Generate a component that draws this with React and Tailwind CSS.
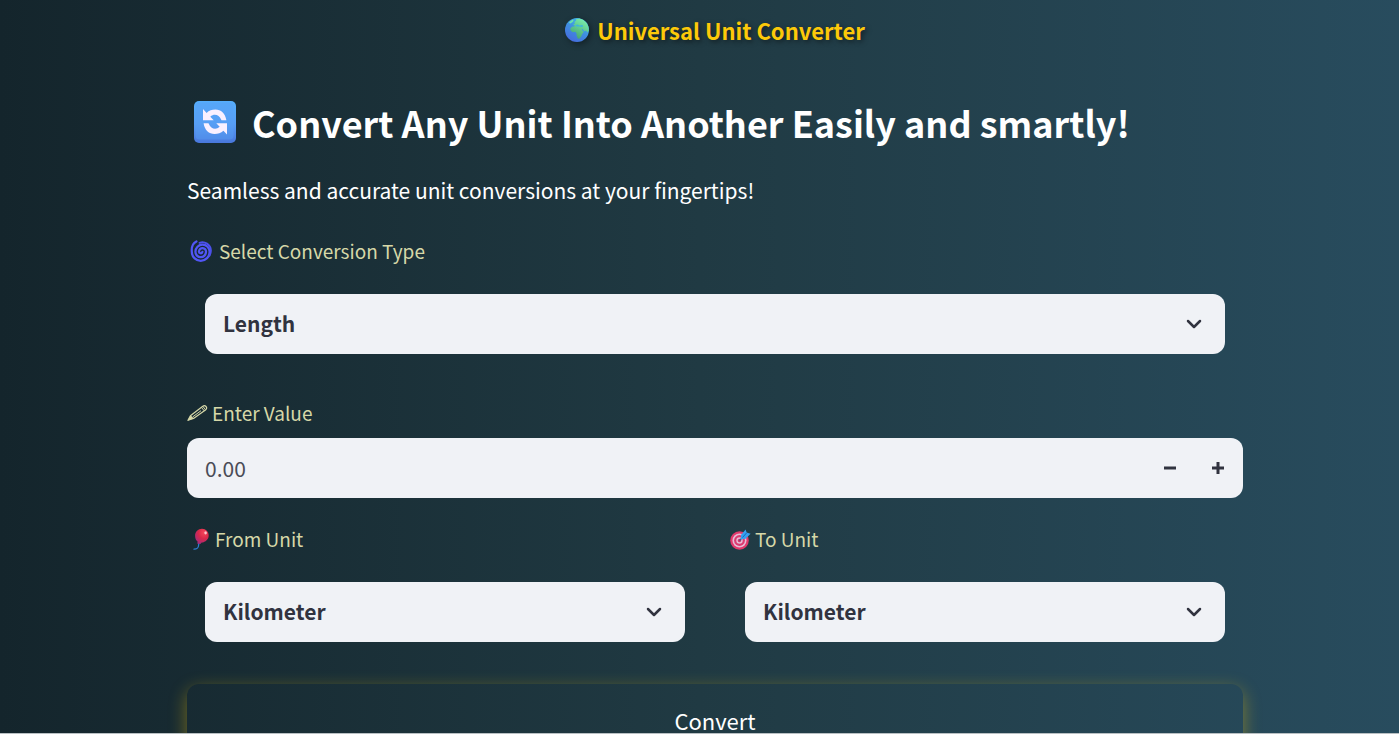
import { useState } from "react";

const units = ["Kilometer", "Meter", "Centimeter", "Mile", "Foot", "Inch"];
const types = ["Length", "Weight", "Temperature", "Time"];

function Globe() {
  return (
    <svg viewBox="0 0 24 24" className="size-6 shrink-0 drop-shadow-[2px_2px_3px_rgba(0,0,0,0.4)]" aria-hidden="true">
      <defs>
        <linearGradient id="sea" x1="0.8" y1="0" x2="0.2" y2="1">
          <stop offset="0" stopColor="#42c3e8" />
          <stop offset="0.5" stopColor="#3f8ee0" />
          <stop offset="1" stopColor="#4668de" />
        </linearGradient>
        <linearGradient id="land" x1="0.8" y1="0" x2="0.3" y2="1">
          <stop offset="0" stopColor="#7cf2b0" />
          <stop offset="1" stopColor="#45a36f" />
        </linearGradient>
      </defs>
      <circle cx="12" cy="12" r="12" fill="url(#sea)" />
      <path
        fill="url(#land)"
        d="M8.200 6.600 10 5.400 9.400 4 11.200 2.600 11 1.200 14.200.6 18 1.800 21.400 4.700 23.400 8.600 23.800 12.800 22.300 14.400 21.200 12.600 19.300 13.200 17.900 11.300 16.600 10.600 17.600 12.900 18.900 13.800 17.200 16 16.300 18.300 14.600 20.600 12.900 20.800 11.700 17.900 11.500 15.200 10.200 13.800 7.600 14.200 5.600 12.600 5.300 10.600 7 8.700 10.200 8.200z"
      />
      <path d="M10 7.600 12.400 6.600 14.500 7.400 17.400 6.900 18.200 8.200 17 9 13.900 8.600 11.500 8.400z" fill="#3fb4dd" />
      <path d="M3.900 4.500 7.400 1.800 8.600 2.200 7.600 4 5.300 5.500z" fill="#6de5a8" />
    </svg>
  );
}

function Cycle() {
  return (
    <svg viewBox="0 0 42 42" className="size-[42px] shrink-0" aria-hidden="true">
      <defs>
        <linearGradient id="tile" x1="0" y1="0" x2="0" y2="1">
          <stop offset="0" stopColor="#55aefc" />
          <stop offset="0.55" stopColor="#579df5" />
          <stop offset="1" stopColor="#4977dc" />
        </linearGradient>
      </defs>
      <rect width="42" height="42" rx="5" fill="url(#tile)" />
      <rect x="1.5" y="1.5" width="38" height="37" rx="4" fill="#599ff4" opacity="0.45" />
      <g fill="#faf0ff">
        <path d="M9 8v11.300h10.700l-3.400-3.500c3.800-3.600 9-2 10.800 2.800l.4.700h4.900C31.200 12.400 27 8.600 21.500 8.600c-3.500 0-6.500 1.100-8.900 3.300z" />
        <path d="M33 33.600V22.300H22.300l3.400 3.500c-3.800 3.600-9 2-10.800-2.800l-.4-.7H9.600C10.600 29.200 15 33 20.500 33c3.500 0 6.500-1.100 8.900-3.200z" />
      </g>
    </svg>
  );
}

function Cyclone() {
  return (
    <svg viewBox="0.5 0.5 19.500 19.500" className="size-[22px] shrink-0" aria-hidden="true">
      <path
        fill="none"
        stroke="#5156f6"
        strokeWidth="2"
        strokeLinecap="round"
        d="M11.500 11A1.500 1.500 0 0 1 8.500 10.500 3.100 3.100 0 0 1 14.700 11 4.700 4.700 0 0 1 5.300 11 6.300 6.300 0 0 1 17.900 11 7.900 7.900 0 0 1 2.100 11C1.800 7.500 3 3.300 6.200 1.800"
      />
      <path
        fill="none"
        stroke="#4b50ea"
        strokeWidth="1.700"
        strokeLinecap="round"
        d="M9 3C13.500 1.300 18.700 4.500 19 9.600c.1 2-.4 3.400-1.300 4.900"
      />
    </svg>
  );
}

function Pencil() {
  return (
    <svg viewBox="0 0 21 18" className="h-[18px] w-[21px] shrink-0" aria-hidden="true">
      <path
        d="M1 16.300 3.400 11.800 15.800 2.200Q17.600.9 19 2.500T18.800 5.700L6.500 14.400z"
        fill="none"
        stroke="#d6d8a8"
        strokeWidth="1.200"
        strokeLinejoin="round"
      />
      <path d="M.6 16.700 3.400 11.800 5.200 12.400 6.500 14.400z" fill="#d6d8a8" />
      <path d="M14.400 3.300 17.300 6.900M15.800 2.300l2.800 3.500M6 12.700l8-6" stroke="#d6d8a8" strokeWidth="1" />
    </svg>
  );
}

function Balloon() {
  return (
    <svg viewBox="0 0 16 22" className="h-[22px] w-4 shrink-0" aria-hidden="true">
      <defs>
        <radialGradient id="balloon" cx="0.65" cy="0.25" r="0.8">
          <stop offset="0" stopColor="#f5475a" />
          <stop offset="0.5" stopColor="#d9284a" />
          <stop offset="1" stopColor="#a32a7c" />
        </radialGradient>
      </defs>
      <path d="M5.800 15.500C5.400 18 6.200 21.200 1 21.200" fill="none" stroke="#2d7fd3" strokeWidth="1.300" strokeLinecap="round" />
      <path d="M9 .8c3.900 0 6.700 3 6.700 6.600 0 3.900-3.200 6.600-7 7.200l-1.400 1.500-3.200-.7.600-1.600C2.900 12.400 2.100 10.300 2.100 7.800 2.100 3.800 5.100.8 9 .8z" fill="url(#balloon)" />
      <ellipse cx="12.600" cy="4.800" rx="1.300" ry="1.600" fill="#ffc4cc" />
    </svg>
  );
}

function Target() {
  return (
    <svg viewBox="0 0 21 21" className="size-[21px] shrink-0" aria-hidden="true">
      <circle cx="9.500" cy="11.500" r="9.300" fill="#e2396c" />
      <circle cx="9.500" cy="11.500" r="7" fill="#e6bcd6" />
      <circle cx="9.500" cy="11.500" r="5.400" fill="#dc3a70" />
      <circle cx="9.500" cy="11.500" r="3.200" fill="#e6bcd6" />
      <circle cx="9.500" cy="11.500" r="1.700" fill="#d83268" />
      <path d="M9.500 11.500l5-5" stroke="#315f94" strokeWidth="1.400" />
      <path d="M10.800 10.200 11 6 15.600.4l1 3.200 4 1.100-5.400 5.400z" fill="#35a0ef" />
      <path d="M12.500 8.500l4-4.500" stroke="#1768bd" strokeWidth="1" />
    </svg>
  );
}

function Chevron() {
  return (
    <svg
      viewBox="0 0 24 24"
      className="pointer-events-none mr-[19px] size-6 self-center justify-self-end [grid-area:1/1]"
      fill="none"
      stroke="#31333f"
      strokeWidth="2.500"
      strokeLinecap="round"
      strokeLinejoin="round"
      aria-hidden="true"
    >
      <path d="M6 9l6 6 6-6" />
    </svg>
  );
}

function Label({ htmlFor, icon, className, children }) {
  return (
    <label htmlFor={htmlFor} className={`flex h-8 items-center text-[19px] leading-8 text-[#d6d8a8] ${className}`}>
      {icon}
      <span>{children}</span>
    </label>
  );
}

function Select({ id, options }) {
  const [value, setValue] = useState(options[0]);
  return (
    <div className="mx-[18px] mt-[27px] grid">
      <select
        id={id}
        value={value}
        onChange={(e) => setValue(e.target.value)}
        className="h-[60px] w-full appearance-none rounded-xl bg-[#f0f2f6] pr-14 pl-[18px] text-[21px] font-bold text-[#31333f] [grid-area:1/1]"
      >
        {options.map((o) => (
          <option key={o}>{o}</option>
        ))}
      </select>
      <Chevron />
    </div>
  );
}

export default function App() {
  const [value, setValue] = useState("0.00");
  const step = (d) => setValue((Number(value) + d).toFixed(2));
  return (
    <div className="h-screen overflow-y-auto border-b border-[#b9c0c3] bg-linear-to-r from-[#14252c] via-[#203a43] to-[#284c5e] pl-[31px] font-['Noto_Sans_CJK_JP','Source_Sans_Pro',sans-serif] text-white [scrollbar-width:none]">
      <main className="mx-auto max-w-[1056px] pb-12">
        <header className="flex h-[59px] items-center justify-center gap-2 text-[22px] leading-8 font-bold text-[#fdc909] [text-shadow:2px_2px_5px_rgba(0,0,0,0.5)]">
          <Globe />
          <span>Universal Unit Converter</span>
        </header>
        <h1 className="mt-8 flex h-[62px] items-center gap-4 pl-[7px] text-[36px] leading-[60px] font-bold">
          <Cycle />
          <span>Convert Any Unit Into Another Easily and smartly!</span>
        </h1>
        <p className="mt-[19px] text-[21px] leading-9">Seamless and accurate unit conversions at your fingertips!</p>

        <Label htmlFor="type" icon={<Cyclone />} className="mt-[27px] gap-[7px] pl-[3px]">
          Select Conversion Type
        </Label>
        <Select id="type" options={types} />

        <Label htmlFor="value" icon={<Pencil />} className="mt-[43px] gap-1">
          Enter Value
        </Label>
        <div className="mt-[9px] flex h-[60px] items-center overflow-hidden rounded-xl bg-[#f0f2f6] text-[#4a4c57]">
          <input
            id="value"
            inputMode="decimal"
            value={value}
            onChange={(e) => setValue(e.target.value)}
            className="h-full min-w-0 flex-1 bg-transparent pl-[18px] text-[21px] outline-none"
          />
          <button type="button" aria-label="Decrease" onClick={() => step(-1)} className="flex h-full w-12 items-center justify-center">
            <svg viewBox="0 0 12 12" className="size-3" aria-hidden="true">
              <path d="M0 6h12" stroke="#31333f" strokeWidth="3" />
            </svg>
          </button>
          <button type="button" aria-label="Increase" onClick={() => step(1)} className="mr-px flex h-full w-12 items-center justify-center">
            <svg viewBox="0 0 12 12" className="size-3" aria-hidden="true">
              <path d="M0 6h12M6 0v12" stroke="#31333f" strokeWidth="3" />
            </svg>
          </button>
        </div>

        <div className="mt-[25px] grid grid-cols-2 gap-6">
          <div>
            <Label htmlFor="from" icon={<Balloon />} className="gap-1.5 pl-1.5">
              From Unit
            </Label>
            <Select id="from" options={units} />
          </div>
          <div>
            <Label htmlFor="to" icon={<Target />} className="gap-1 pl-[3px]">
              To Unit
            </Label>
            <Select id="to" options={units} />
          </div>
        </div>

        <button
          type="button"
          className="mt-[42px] h-[72px] w-full rounded-xl text-[22px] leading-6 shadow-[0_6px_18px_rgba(255,204,0,0.4)]"
        >
          Convert
        </button>
      </main>
    </div>
  );
}
